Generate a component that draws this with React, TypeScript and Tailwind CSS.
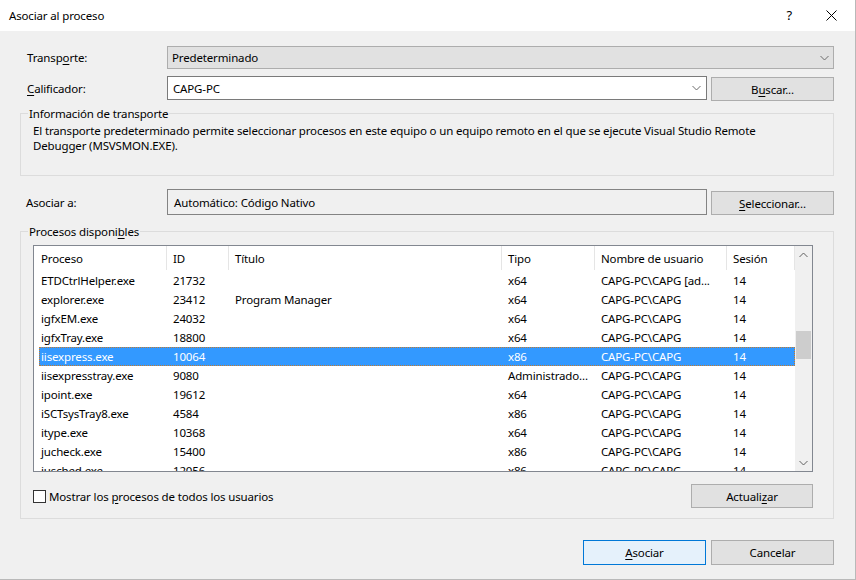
import React from 'react';

type Row = {
  proceso: string;
  id: string;
  titulo: string;
  tipo: string;
  usuario: string;
  sesion: string;
  selected?: boolean;
};

const rows: Row[] = [
  { proceso: 'ETDCtrlHelper.exe', id: '21732', titulo: '', tipo: 'x64', usuario: 'CAPG-PC\\CAPG [ad...', sesion: '14' },
  { proceso: 'explorer.exe', id: '23412', titulo: 'Program Manager', tipo: 'x64', usuario: 'CAPG-PC\\CAPG', sesion: '14' },
  { proceso: 'igfxEM.exe', id: '24032', titulo: '', tipo: 'x64', usuario: 'CAPG-PC\\CAPG', sesion: '14' },
  { proceso: 'igfxTray.exe', id: '18800', titulo: '', tipo: 'x64', usuario: 'CAPG-PC\\CAPG', sesion: '14' },
  { proceso: 'iisexpress.exe', id: '10064', titulo: '', tipo: 'x86', usuario: 'CAPG-PC\\CAPG', sesion: '14', selected: true },
  { proceso: 'iisexpresstray.exe', id: '9080', titulo: '', tipo: 'Administrado...', usuario: 'CAPG-PC\\CAPG', sesion: '14' },
  { proceso: 'ipoint.exe', id: '19612', titulo: '', tipo: 'x64', usuario: 'CAPG-PC\\CAPG', sesion: '14' },
  { proceso: 'iSCTsysTray8.exe', id: '4584', titulo: '', tipo: 'x86', usuario: 'CAPG-PC\\CAPG', sesion: '14' },
  { proceso: 'itype.exe', id: '10368', titulo: '', tipo: 'x64', usuario: 'CAPG-PC\\CAPG', sesion: '14' },
  { proceso: 'jucheck.exe', id: '15400', titulo: '', tipo: 'x86', usuario: 'CAPG-PC\\CAPG', sesion: '14' },
  { proceso: 'jusched.exe', id: '12056', titulo: '', tipo: 'x86', usuario: 'CAPG-PC\\CAPG', sesion: '14' },
];

function Chevron({ up = false, className = '' }: { up?: boolean; className?: string }) {
  return (
    <svg width="9" height="6" viewBox="0 0 9 6" className={className}>
      <polyline
        points={up ? '0.5,5 4.5,1 8.5,5' : '0.5,1 4.5,5 8.5,1'}
        fill="none"
        stroke="currentColor"
        strokeWidth="1"
      />
    </svg>
  );
}

function Button({ children, width, primary = false }: { children: React.ReactNode; width: string; primary?: boolean }) {
  return (
    <button
      className={`${width} h-full flex items-center justify-center border ${
        primary ? 'bg-[#e5f1fb] border-[#0078d7]' : 'bg-[#e1e1e1] border-[#adadad]'
      }`}
    >
      {children}
    </button>
  );
}

export default function App() {
  return (
    <div className="w-[856px] h-[580px] bg-[#f0f0f0] border-r border-b border-[#b9b9b9] flex flex-col text-[11.5px] tracking-[-0.15px] leading-[15px] text-black font-['Noto_Sans',sans-serif]">
      {/* Title bar */}
      <div className="h-[31px] shrink-0 bg-white flex items-center pl-[9px] pr-[18px]">
        <span>Asociar al proceso</span>
        <span className="ml-auto text-[13px]">?</span>
        <svg width="11" height="11" viewBox="0 0 11 11" className="ml-[34px]">
          <path d="M0.5 0.5 L10.5 10.5 M10.5 0.5 L0.5 10.5" stroke="#000" strokeWidth="1" />
        </svg>
      </div>

      <div className="flex flex-col pl-[20px]">
        {/* Transporte */}
        <div className="mt-[15px] h-[23px] flex items-center">
          <label className="w-[147px] pl-[7px]">
            Transp<u className="underline-offset-2">o</u>rte:
          </label>
          <div className="w-[667px] h-full bg-[#e1e1e1] border border-[#adadad] flex items-center pl-[4px] pr-[4px]">
            <span>Predeterminado</span>
            <Chevron className="ml-auto text-[#6d6d6d]" />
          </div>
        </div>

        {/* Calificador */}
        <div className="mt-[7px] h-[25px] flex items-start">
          <label className="w-[147px] pl-[7px] self-center">
            <u className="underline-offset-2">C</u>alificador:
          </label>
          <div className="w-[540px] h-[24px] bg-white border border-[#7a7a7a] flex items-center pl-[5px] pr-[5px]">
            <span>CAPG-PC</span>
            <Chevron className="ml-auto text-[#6d6d6d]" />
          </div>
          <div className="ml-[4px] mt-[1px] h-[24px]">
            <Button width="w-[123px]">
              B<u className="underline-offset-2">u</u>scar...
            </Button>
          </div>
        </div>

        {/* Información de transporte */}
        <fieldset className="mt-[5px] w-[814px] h-[70px] border border-[#dcdcdc]">
          <legend className="ml-[7px] px-px leading-[15px]">Información de transporte</legend>
          <p className="pl-[12px] pt-[2px] leading-[15px]">
            El transporte predeterminado permite seleccionar procesos en este equipo o un equipo remoto en el que se ejecute Visual Studio Remote
            <br />
            Debugger (MSVSMON.EXE).
          </p>
        </fieldset>

        {/* Asociar a */}
        <div className="mt-[13px] h-[26px] flex items-start">
          <label className="w-[147px] pl-[6px] self-center">Asociar a:</label>
          <div className="w-[540px] h-[26px] border border-[#838383] flex items-center pl-[6px]">
            Automático: Código Nativo
          </div>
          <div className="ml-[4px] mt-[2px] h-[24px]">
            <Button width="w-[123px]">
              <u className="underline-offset-2">S</u>eleccionar...
            </Button>
          </div>
        </div>

        {/* Procesos disponibles */}
        <fieldset className="mt-[9px] w-[814px] h-[295px] border border-[#dcdcdc]">
          <legend className="ml-[7px] px-px leading-[15px]">
            Procesos disponi<u className="underline-offset-2">b</u>les
          </legend>

          <div className="ml-[12px] mt-[6px] w-[780px] h-[227px] border border-[#828790] bg-white flex">
            <div className="w-[761px] flex flex-col overflow-hidden">
              <div className="h-[25px] shrink-0 flex">
                <div className="w-[133px] pl-[7px] pt-[5px] border-r border-[#e5e5e5] mb-[1px]">Proceso</div>
                <div className="w-[62px] pl-[6px] pt-[5px] border-r border-[#e5e5e5] mb-[1px]">ID</div>
                <div className="w-[273px] pl-[6px] pt-[5px] border-r border-[#e5e5e5] mb-[1px]">Título</div>
                <div className="w-[93px] pl-[6px] pt-[5px] border-r border-[#e5e5e5] mb-[1px]">Tipo</div>
                <div className="w-[132px] pl-[6px] pt-[5px] border-r border-[#e5e5e5] mb-[1px]">Nombre de usuario</div>
                <div className="w-[68px] pl-[6px] pt-[5px] border-r border-[#e5e5e5] mb-[1px]">Sesión</div>
              </div>
              {rows.map((r) => (
                <div
                  key={r.proceso}
                  className={`ml-[5px] w-[756px] h-[19px] shrink-0 flex items-center whitespace-nowrap ${
                    r.selected
                      ? 'bg-[#3399ff] text-white outline-1 outline-dotted -outline-offset-1 outline-[#c57a2c]'
                      : ''
                  }`}
                >
                  <div className="w-[128px] pl-[2px] overflow-hidden">{r.proceso}</div>
                  <div className="w-[62px] pl-[6px] overflow-hidden">{r.id}</div>
                  <div className="w-[273px] pl-[6px] overflow-hidden">{r.titulo}</div>
                  <div className="w-[93px] pl-[6px] overflow-hidden">{r.tipo}</div>
                  <div className="w-[132px] pl-[6px] overflow-hidden">{r.usuario}</div>
                  <div className="w-[68px] pl-[6px] overflow-hidden">{r.sesion}</div>
                </div>
              ))}
            </div>

            {/* Scrollbar */}
            <div className="w-[17px] bg-[#f0f0f0] flex flex-col">
              <div className="h-[17px] flex items-center justify-center text-[#606060]">
                <Chevron up />
              </div>
              <div className="h-[68px]" />
              <div className="mx-px h-[28px] bg-[#cdcdcd]" />
              <div className="flex-1" />
              <div className="h-[17px] flex items-center justify-center text-[#606060]">
                <Chevron />
              </div>
            </div>
          </div>

          <div className="ml-[12px] mt-[12px] w-[780px] h-[24px] flex items-center justify-between">
            <label className="flex items-center">
              <span className="w-[13px] h-[13px] border border-[#333333] bg-white" />
              <span className="ml-[3px]">
                Mostrar los <u className="underline-offset-2">p</u>rocesos de todos los usuarios
              </span>
            </label>
            <Button width="w-[122px]">
              Actuali<u className="underline-offset-2">z</u>ar
            </Button>
          </div>
        </fieldset>

        {/* Bottom buttons */}
        <div className="mt-[21px] w-[814px] h-[25px] flex justify-end gap-[5px]">
          <Button width="w-[123px]" primary>
            <u className="underline-offset-2">A</u>sociar
          </Button>
          <Button width="w-[123px]">Cancelar</Button>
        </div>
      </div>
    </div>
  );
}
